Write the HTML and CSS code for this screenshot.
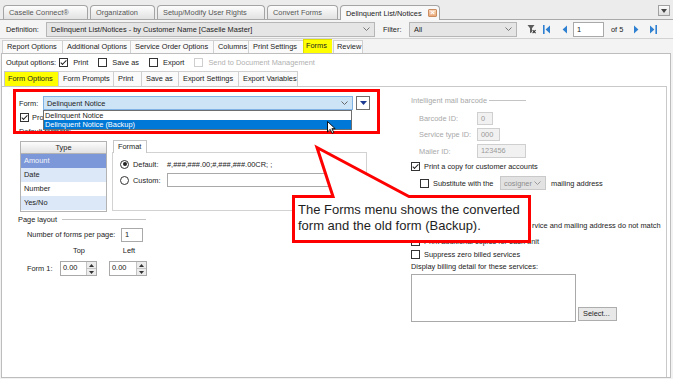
FILE: index.html
```html
<!DOCTYPE html>
<html lang="en">
<head>
  <meta charset="UTF-8">
  <title>Delinquent List/Notices</title>
  <link rel="stylesheet" href="styles.css">
</head>
<body>
<div class="app">

  <div class="docTabs">
    <div class="docTab">Caselle Connect®</div>
    <div class="docTab">Organization</div>
    <div class="docTab">Setup/Modify User Rights</div>
    <div class="docTab">Convert Forms</div>
    <div class="docTab active">Delinquent List/Notices<span class="closeIcon">×</span></div>
    <div class="menuBtn">
      <svg width="6" height="4" viewBox="0 0 6 4"><path d="M0 0H6L3 4Z" fill="#444"/></svg>
    </div>
  </div>

  <div class="toolbar">
    <span class="defLbl">Definition:</span>
    <div class="combo defCombo">
      <span>Delinquent List/Notices - by Customer Name [Caselle Master]</span>
      <svg class="chev" width="7" height="4" viewBox="0 0 7 4"><path d="M0.5 0.5L3.5 3.5L6.5 0.5" fill="none" stroke="#777"/></svg>
    </div>
    <span class="filterLbl">Filter:</span>
    <div class="combo filterCombo">
      <span>All</span>
      <svg class="chev" width="7" height="4" viewBox="0 0 7 4"><path d="M0.5 0.5L3.5 3.5L6.5 0.5" fill="none" stroke="#777"/></svg>
    </div>
    <svg class="filterIcon" width="9" height="10" viewBox="0 0 9 10">
      <path d="M0.5 1H7.5L5 4.2V8L3 9.3V4.2Z" fill="#5c5c5c"/>
      <path d="M5.6 6.2L8.6 9.2M8.6 6.2L5.6 9.2" stroke="#333" stroke-width="1.1"/>
    </svg>
    <svg class="navFirst" width="7" height="9" viewBox="0 0 7 9"><rect width="1.6" height="9" fill="#2f80d1"/><path d="M7 0.5L2.6 4.5L7 8.5Z" fill="#2f80d1"/></svg>
    <svg class="navPrev" width="5" height="9" viewBox="0 0 5 9"><path d="M5 0.5L0.6 4.5L5 8.5Z" fill="#2f80d1"/></svg>
    <div class="pageBox">1</div>
    <span class="ofPages">of 5</span>
    <svg class="navNext" width="5" height="9" viewBox="0 0 5 9"><path d="M0 0.5L4.4 4.5L0 8.5Z" fill="#2f80d1"/></svg>
    <svg class="navLast" width="7" height="9" viewBox="0 0 7 9"><path d="M0 0.5L4.4 4.5L0 8.5Z" fill="#2f80d1"/><rect x="5.4" width="1.6" height="9" fill="#2f80d1"/></svg>
  </div>

  <div class="subTabs">
    <div class="subTab">Report Options</div>
    <div class="subTab">Additional Options</div>
    <div class="subTab">Service Order Options</div>
    <div class="subTab">Columns</div>
    <div class="subTab">Print Settings</div>
    <div class="subTab current">Forms</div>
    <div class="subTab last">Review</div>
  </div>

  <div class="page">
    <div class="outputRow">
      <span class="outLbl">Output options:</span>
      <span class="chk"><span class="box checked"></span>Print</span>
      <span class="chk"><span class="box"></span>Save as</span>
      <span class="chk"><span class="box"></span>Export</span>
      <span class="chk off"><span class="box"></span>Send to Document Management</span>
    </div>

    <div class="formTabs">
      <div class="formTab current">Form Options</div>
      <div class="formTab">Form Prompts</div>
      <div class="formTab">Print</div>
      <div class="formTab">Save as</div>
      <div class="formTab">Export Settings</div>
      <div class="formTab last">Export Variables</div>
    </div>

    <div class="formPanel">
      <div class="leftCol">
        <div class="formRow">
          <span class="formLbl">Form:</span>
          <div class="formSelect">
            <div class="combo formCombo">
              <span>Delinquent Notice</span>
              <svg class="chev" width="7" height="4" viewBox="0 0 7 4"><path d="M0.5 0.5L3.5 3.5L6.5 0.5" fill="none" stroke="#666"/></svg>
            </div>
            <div class="dropList">
              <div class="dropItem">Delinquent Notice</div>
              <div class="dropItem picked">Delinquent Notice (Backup)</div>
            </div>
          </div>
          <div class="ddBtn">
            <svg width="7" height="4" viewBox="0 0 7 4"><path d="M0 0H7L3.5 4Z" fill="#1c3a8f"/></svg>
          </div>
        </div>

        <div class="chkRow procRow"><span class="box checked"></span><span class="procText">Pro</span></div>
        <div class="defFormats">Default formats:</div>

        <div class="formatRow">
          <div class="typeGrid">
            <div class="typeHead">Type</div>
            <div class="typeCell chosen">Amount</div>
            <div class="typeCell tint">Date</div>
            <div class="typeCell">Number</div>
            <div class="typeCell tint">Yes/No</div>
          </div>
          <div class="formatBox">
            <div class="fmtTab">Format</div>
            <div class="fmtPanel">
              <div class="radioRow">
                <span class="radio on"></span>
                <span class="rLbl">Default:</span>
                <span class="fmtValue">#,###,###.00;#,###,###.00CR; ;</span>
              </div>
              <div class="radioRow">
                <span class="radio"></span>
                <span class="rLbl">Custom:</span>
                <div class="customInput"></div>
              </div>
            </div>
          </div>
        </div>

        <div class="groupHead"><span>Page layout</span><span class="groupLine"></span></div>
        <div class="perPageRow">
          <span class="perPageLbl">Number of forms per page:</span>
          <div class="field perPage">1</div>
        </div>
        <div class="colHeads">
          <span class="colHead">Top</span>
          <span class="colHead">Left</span>
        </div>
        <div class="spinRow">
          <span class="spinLbl">Form 1:</span>
          <div class="spin">
            <span class="spinVal">0.00</span>
            <span class="spinBtns">
              <span class="spinUp"><svg width="5" height="3" viewBox="0 0 5 3"><path d="M0 3H5L2.5 0Z" fill="#333"/></svg></span>
              <span class="spinDown"><svg width="5" height="3" viewBox="0 0 5 3"><path d="M0 0H5L2.5 3Z" fill="#333"/></svg></span>
            </span>
          </div>
          <div class="spin second">
            <span class="spinVal">0.00</span>
            <span class="spinBtns">
              <span class="spinUp"><svg width="5" height="3" viewBox="0 0 5 3"><path d="M0 3H5L2.5 0Z" fill="#333"/></svg></span>
              <span class="spinDown"><svg width="5" height="3" viewBox="0 0 5 3"><path d="M0 0H5L2.5 3Z" fill="#333"/></svg></span>
            </span>
          </div>
        </div>
      </div>

      <div class="rightCol">
        <div class="legend"><span>Intelligent mail barcode</span><span class="legendLine"></span></div>
        <div class="idRow first"><span class="idLbl">Barcode ID:</span><span class="field idField barcode">0</span></div>
        <div class="idRow"><span class="idLbl">Service type ID:</span><span class="field idField service">000</span></div>
        <div class="idRow mailer"><span class="idLbl">Mailer ID:</span><span class="field idField mailerId">123456</span></div>

        <div class="chkRow copyRow"><span class="box checked"></span>Print a copy for customer accounts</div>
        <div class="chkRow subRow">
          <span class="box"></span>
          <span class="subText">Substitute with the</span>
          <div class="combo miniCombo">
            <span>cosigner</span>
            <svg class="chev" width="7" height="4" viewBox="0 0 7 4"><path d="M0.5 0.5L3.5 3.5L6.5 0.5" fill="none" stroke="#999"/></svg>
          </div>
          <span class="mailText">mailing address</span>
        </div>
        <div class="chkRow hidden1"><span class="box"></span></div>
        <div class="chkRow hidden2 indent"><span class="box"></span></div>
        <div class="tailRow">rvice and mailing address do not match</div>
        <div class="chkRow addRow"><span class="box"></span>Print additional copies for each unit</div>
        <div class="chkRow zeroRow"><span class="box"></span>Suppress zero billed services</div>
        <div class="billLbl">Display billing detail for these services:</div>
        <div class="billRow">
          <div class="billBox"></div>
          <div class="selectBtn">Select...</div>
        </div>
      </div>
    </div>
  </div>

  <!-- annotation layer -->
  <div class="redBox"></div>
  <svg class="cursor" width="9" height="13" viewBox="0 0 9 13">
    <path d="M0.5 0.5V11L3.2 8.4L5.1 12.3L6.8 11.5L4.9 7.7H8.2Z" fill="#fff" stroke="#000" stroke-width="0.9" stroke-linejoin="round"/>
  </svg>
  <svg class="callout" width="673" height="379" viewBox="0 0 673 379">
    <path d="M293.5 196.5H333L317 147.5L409 196.5H529.5V241.5H293.5Z" fill="#fff" stroke="#f00" stroke-width="3"/>
  </svg>
  <div class="calloutText">The Forms menu shows the converted<br>form and the old form (Backup).</div>
</div>
</body>
</html>
```

FILE: styles.css
```css
* {
  box-sizing: border-box;
  margin: 0;
  padding: 0;
}

body {
  font-family: "Liberation Sans", Arial, sans-serif;
  font-size: 7.4px;
  color: #222;
  background: #fff;
}

.app {
  position: relative;
  width: 673px;
  height: 379px;
  overflow: hidden;
  background: #f2f2f2;
  white-space: nowrap;
}

/* document tabs */

.docTabs {
  display: flex;
  align-items: flex-end;
  height: 20px;
  padding-left: 3px;
  border-bottom: 1px solid #a9a9a9;
  background: #ececec;
}

.docTab {
  height: 14px;
  line-height: 13px;
  padding-left: 5px;
  margin-right: 2px;
  border: 1px solid #a4a4a4;
  border-bottom: none;
  border-radius: 4px 4px 0 0;
  background: linear-gradient(#fdfdfd, #e2e2e2);
  color: #555;
}

.docTab:nth-child(1) { width: 85px; }
.docTab:nth-child(2) { width: 65px; }
.docTab:nth-child(3) { width: 108px; }
.docTab:nth-child(4) { width: 71px; }

.docTab.active {
  display: flex;
  align-items: center;
  width: 100px;
  height: 15px;
  margin-bottom: -1px;
  background: #f8f8f8;
  color: #222;
}

.closeIcon {
  width: 9px;
  height: 8px;
  margin-left: auto;
  margin-right: 2px;
  border: 1px solid #c98d5f;
  border-radius: 1px;
  background: linear-gradient(#f7d6bb, #eaa979);
  color: #fff;
  font-size: 8px;
  line-height: 6px;
  text-align: center;
  font-weight: bold;
}

.menuBtn {
  display: flex;
  align-items: center;
  justify-content: center;
  width: 12px;
  height: 11px;
  margin: 0 3px 3px auto;
  border: 1px solid #a0a0a0;
  background: linear-gradient(#fbfbfb, #dedede);
}

/* definition toolbar */

.toolbar {
  display: flex;
  align-items: center;
  height: 19px;
  padding-left: 6px;
  border-bottom: 1px solid #d2d2d2;
  background: #f4f4f4;
}

.defLbl { width: 40px; }

.combo {
  display: flex;
  align-items: center;
  height: 15px;
  padding: 0 4px;
  border: 1px solid #b6b6b6;
  background: #e5e5e5;
}

.combo span { flex: 1; }

.defCombo { width: 329px; }

.filterLbl {
  width: 26px;
  margin-left: 8px;
}

.filterCombo { width: 108px; }

.filterIcon { margin-left: 10px; }
.navFirst { margin-left: 7px; }
.navPrev { margin-left: 12px; }

.pageBox {
  width: 31px;
  height: 15px;
  margin-left: 6px;
  padding-left: 3px;
  line-height: 13px;
  border: 1px solid #a9a9a9;
  background: #fff;
}

.ofPages { margin-left: 7px; }
.navNext { margin-left: 11px; }
.navLast { margin-left: 11px; }

/* report sub tabs */

.subTabs {
  display: flex;
  align-items: flex-end;
  height: 14px;
  padding-left: 2px;
  background: #f3f3f3;
}

.subTab {
  height: 13px;
  line-height: 12px;
  padding-left: 4px;
  border: 1px solid #d0d0d0;
  border-right: none;
  border-bottom: none;
  background: #fafafa;
}

.subTab:nth-child(1) { width: 60px; }
.subTab:nth-child(2) { width: 68px; }
.subTab:nth-child(3) { width: 83px; }
.subTab:nth-child(4) { width: 35px; }
.subTab:nth-child(5) { width: 55px; }

.subTab.current {
  width: 29px;
  height: 14px;
  padding-left: 2px;
  background: #ffff00;
  border-color: #e0e000;
}

.subTab.last {
  width: 30px;
  margin-left: 1px;
  padding-left: 3px;
  border-right: 1px solid #d0d0d0;
}

/* page body */

.page {
  display: flex;
  flex-direction: column;
  width: 670px;
  height: 325px;
  margin-left: 1px;
  border: 1px solid #bdbdbd;
  background: #fff;
}

.outputRow {
  display: flex;
  align-items: center;
  gap: 10px;
  height: 16px;
  padding-left: 4px;
}

.outLbl { margin-right: -7px; }

.chk {
  display: flex;
  align-items: center;
  gap: 5px;
}

.chk.off { color: #b0b0b0; }
.chk.off .box { border-color: #cfcfcf; }

.box {
  position: relative;
  flex: none;
  width: 9px;
  height: 9px;
  border: 1px solid #333;
  background: #fff;
}

.box.checked::after {
  content: "";
  position: absolute;
  left: 2.3px;
  top: 0;
  width: 2.4px;
  height: 5px;
  border: solid #222;
  border-width: 0 1.2px 1.2px 0;
  transform: rotate(45deg);
}

.formTabs {
  display: flex;
  align-items: flex-end;
  height: 16px;
  padding-left: 2px;
}

.formTab {
  height: 15px;
  line-height: 14px;
  padding-left: 4px;
  border: 1px solid #d0d0d0;
  border-right: none;
  border-bottom: none;
  background: #fafafa;
}

.formTab:nth-child(1) { width: 54px; }
.formTab:nth-child(2) { width: 55px; }
.formTab:nth-child(3) { width: 28px; }
.formTab:nth-child(4) { width: 37px; }
.formTab:nth-child(5) { width: 60px; }
.formTab:nth-child(6) { width: 60px; border-right: 1px solid #d0d0d0; }

.formTab.current {
  padding-left: 3px;
  background: #ffff00;
  border-color: #c8c8c8;
}

.formPanel {
  display: flex;
  flex: 1;
  margin-right: 3px;
  padding: 9px 0 0 17px;
  border-top: 1px solid #c9c9c9;
  border-right: 1px solid #c9c9c9;
}

/* left column */

.leftCol {
  display: flex;
  flex-direction: column;
  width: 392px;
}

.formRow {
  display: flex;
  align-items: center;
  height: 14px;
}

.formLbl { width: 24px; }

.formSelect {
  position: relative;
  width: 310px;
}

.formCombo {
  height: 14px;
  padding-left: 3px;
  border-color: #7fb3e6;
  background: #cde4f7;
}

.dropList {
  position: absolute;
  top: 14px;
  left: 0;
  width: 309px;
  height: 20px;
  border: 1px solid #6e6e6e;
  background: #fff;
  z-index: 2;
}

.dropItem {
  height: 9px;
  line-height: 9px;
  padding-left: 1px;
}

.dropItem.picked {
  background: #0078d7;
  color: #fff;
}

.ddBtn {
  display: flex;
  align-items: center;
  justify-content: center;
  width: 14px;
  height: 14px;
  margin-left: 3px;
  border: 1px solid #6f6f6f;
  background: #fff;
}

.chkRow {
  display: flex;
  align-items: center;
  gap: 4px;
  height: 10px;
}

.procRow {
  margin-top: 3px;
  margin-left: 1px;
  gap: 3px;
  height: 9px;
}

.procText {
  width: 11px;
  overflow: hidden;
}

.defFormats {
  height: 9px;
  line-height: 9px;
  margin-top: 5px;
}

.formatRow {
  display: flex;
  margin-top: 4px;
}

.typeGrid {
  width: 87px;
  height: 71px;
  margin: 1px 0 0 1px;
  border: 1px solid #b3b3b3;
  background: #fff;
}

.typeHead {
  height: 12px;
  line-height: 11px;
  text-align: center;
  border-bottom: 1px solid #b3b3b3;
  background: linear-gradient(#fcfcfc, #e2e2e2);
}

.typeCell {
  height: 14px;
  line-height: 14px;
  padding-left: 3px;
}

.typeCell.tint { background: #dce8f7; }

.typeCell.chosen {
  background: #7d98d8;
  color: #f2f5fb;
}

.formatBox {
  width: 255px;
  margin-left: 5px;
}

.fmtTab {
  position: relative;
  width: 34px;
  height: 13px;
  margin-left: 1px;
  margin-bottom: -1px;
  padding-left: 4px;
  line-height: 12px;
  border: 1px solid #c6c6c6;
  border-bottom: none;
  background: #fff;
}

.fmtPanel {
  height: 59px;
  padding: 4px 0 0 7px;
  border: 1px solid #d2d2d2;
}

.radioRow {
  display: flex;
  align-items: center;
  height: 14px;
  margin-bottom: 2px;
}

.radio {
  position: relative;
  width: 9px;
  height: 9px;
  border: 1px solid #333;
  border-radius: 50%;
  background: #fff;
}

.radio.on::after {
  content: "";
  position: absolute;
  left: 1.5px;
  top: 1.5px;
  width: 4px;
  height: 4px;
  border-radius: 50%;
  background: #222;
}

.rLbl {
  width: 34px;
  margin-left: 4px;
}

.customInput {
  width: 198px;
  height: 14px;
  border: 1px solid #a9a9a9;
  background: #fff;
}

.groupHead {
  display: flex;
  align-items: center;
  height: 10px;
  margin: 2px 0 0 -1px;
}

.groupLine {
  width: 84px;
  height: 1px;
  margin-left: 5px;
  background: #c4c4c4;
}

.perPageRow {
  display: flex;
  align-items: center;
  height: 15px;
  margin: 3px 0 0 8px;
}

.perPageLbl { width: 94px; }

.field {
  height: 14px;
  padding-left: 3px;
  line-height: 12px;
  border: 1px solid #a9a9a9;
  background: #fff;
}

.perPage { width: 22px; }

.colHeads {
  display: flex;
  gap: 12px;
  height: 10px;
  line-height: 10px;
  margin: 4px 0 0 41px;
}

.colHead {
  width: 38px;
  text-align: center;
}

.spinRow {
  display: flex;
  align-items: center;
  height: 15px;
  margin: 5px 0 0 8px;
}

.spinLbl { width: 33px; }

.spin {
  display: flex;
  width: 37px;
  height: 15px;
  border: 1px solid #a9a9a9;
  background: #fff;
}

.spin.second {
  width: 38px;
  margin-left: 12px;
}

.spinVal {
  flex: 1;
  padding-left: 2px;
  line-height: 12px;
}

.spinBtns {
  display: flex;
  flex-direction: column;
  width: 10px;
  border-left: 1px solid #c4c4c4;
}

.spinUp,
.spinDown {
  display: flex;
  flex: 1;
  align-items: center;
  justify-content: center;
  background: #ececec;
}

.spinUp { border-bottom: 1px solid #c4c4c4; }

/* right column */

.rightCol {
  display: flex;
  flex-direction: column;
  flex: 1;
}

.legend {
  display: flex;
  align-items: center;
  width: 115px;
  height: 8px;
  color: #a8a8a8;
}

.legendLine {
  width: 37px;
  height: 1px;
  margin-left: auto;
  background: #c4c4c4;
}

.idRow {
  display: flex;
  align-items: center;
  height: 14px;
  margin-top: 2px;
  padding-left: 8px;
  color: #a8a8a8;
}

.idRow.first { margin-top: 7px; }
.idRow.mailer { margin-top: 3px; }

.idLbl { width: 58px; }

.idField {
  height: 13px;
  border-color: #cfcfcf;
  background: #f1f1f1;
  color: #9a9a9a;
  line-height: 11px;
}

.idField.barcode { width: 16px; }
.idField.service { width: 23px; }
.idField.mailerId { width: 49px; height: 14px; line-height: 12px; }

.copyRow { margin-top: 3px; }

.subRow {
  height: 14px;
  margin-top: 5px;
  padding-left: 9px;
}

.subText { width: 63px; }

.miniCombo {
  width: 46px;
  height: 14px;
  padding-left: 3px;
  border-color: #c9c9c9;
  background: #e2e2e2;
  color: #8c8c8c;
}

.mailText { margin-left: 1px; }

.chkRow.indent { padding-left: 9px; }

.hidden1 { margin-top: 4px; }
.hidden2 { margin-top: 3px; }

.tailRow {
  height: 10px;
  line-height: 10px;
  margin-top: 4px;
  padding-left: 121px;
}

.addRow { margin-top: 5px; }
.zeroRow { margin-top: 3px; }

.billLbl {
  height: 10px;
  line-height: 10px;
  margin-top: 3px;
}

.billRow {
  display: flex;
  align-items: flex-end;
  margin-top: 2px;
}

.billBox {
  width: 165px;
  height: 48px;
  border: 1px solid #a9a9a9;
  background: #fff;
}

.selectBtn {
  width: 39px;
  height: 14px;
  margin: 0 0 1px 2px;
  padding-left: 4px;
  line-height: 12px;
  border: 1px solid #adadad;
  background: #e8e8e8;
}

/* annotations */

.redBox {
  position: absolute;
  left: 13px;
  top: 89px;
  width: 367px;
  height: 45px;
  border: 3px solid #f00;
  z-index: 3;
}

.cursor {
  position: absolute;
  left: 327px;
  top: 121px;
  z-index: 4;
}

.callout {
  position: absolute;
  left: 0;
  top: 0;
  z-index: 5;
}

.calloutText {
  position: absolute;
  left: 298px;
  top: 202px;
  font-size: 13px;
  line-height: 16px;
  color: #1e1e1e;
  z-index: 6;
}
```
